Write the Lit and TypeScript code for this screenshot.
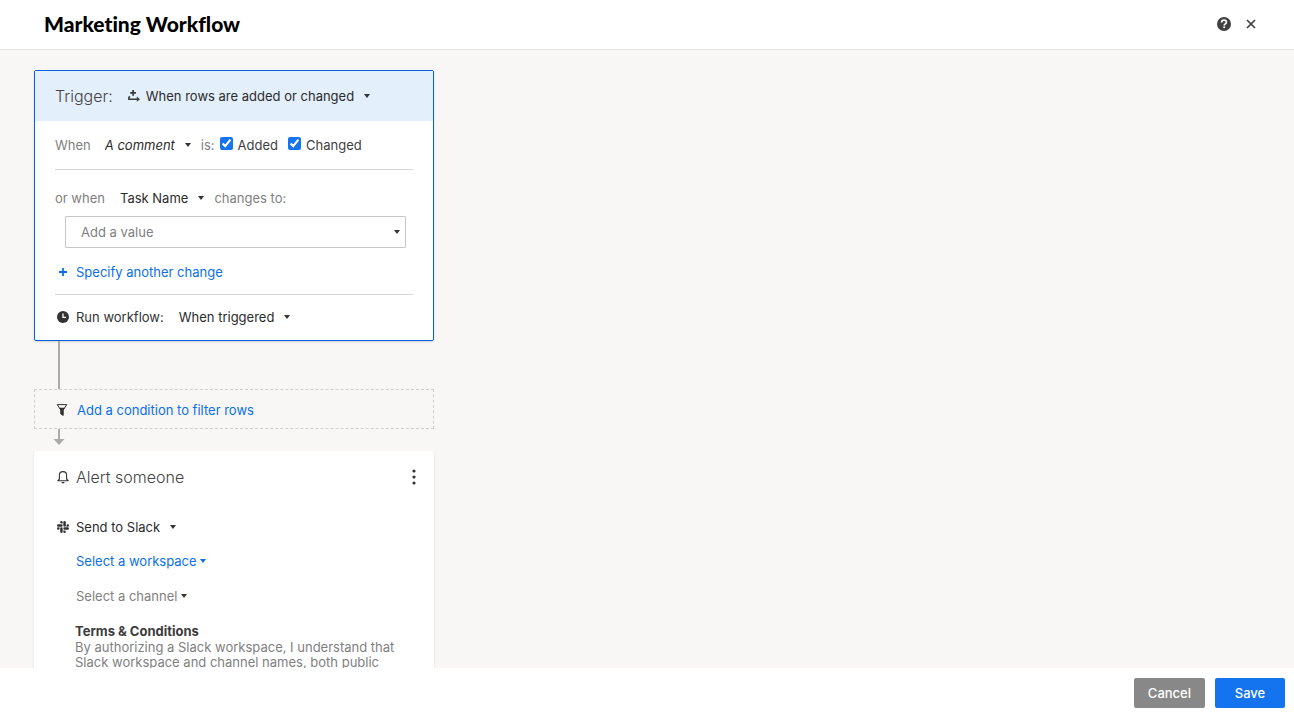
import { LitElement, html, css, svg } from "lit";
import { customElement, property, state } from "lit/decorators.js";

const icons: Record<string, { box: string; size: number; body: unknown }> = {
  help: {
    box: "0 0 14 14",
    size: 14,
    body: svg`<circle cx="7" cy="7" r="7" fill="currentColor"/>
      <path d="M4.6 5.4C4.6 4 5.6 3.2 7 3.2s2.4.8 2.4 2.1c0 1.6-2.2 1.5-2.2 3.1" fill="none" stroke="#fff" stroke-width="1.7"/>
      <rect x="6.3" y="9.3" width="1.8" height="1.8" fill="#fff"/>`,
  },
  close: {
    box: "0 0 10 10",
    size: 10,
    body: svg`<path d="M1 1l8 8M9 1l-8 8" stroke="currentColor" stroke-width="1.7"/>`,
  },
  rows: {
    box: "0 0 12 12",
    size: 12,
    body: svg`<path d="M4.2 0h1.8v2h2v1.8H6v2H4.2v-2h-2V2h2z" fill="currentColor"/>
      <path d="M1.9 6.4L.9 7.4v1.8h9" fill="none" stroke="currentColor" stroke-width="1.6"/>
      <path d="M8.8 6.6L12 9.2l-3.2 2.6z" fill="currentColor"/>`,
  },
  plus: {
    box: "0 0 8 8",
    size: 8,
    body: svg`<path d="M4 0v8M0 4h8" stroke="currentColor" stroke-width="1.8"/>`,
  },
  clock: {
    box: "0 0 12 12",
    size: 12,
    body: svg`<circle cx="6" cy="6" r="6" fill="currentColor"/>
      <path d="M6 2.4v4h3" fill="none" stroke="#fff" stroke-width="1.3"/>`,
  },
  filter: {
    box: "0 0 12 12",
    size: 12,
    body: svg`<path d="M1.2.6h9.6L7.2 6v5.4L4.8 10V6z" fill="none" stroke="currentColor" stroke-width="1"/>
      <path d="M2.8 3.8h6.4L7.2 6.2v5.4L4.8 10V6.2z" fill="currentColor"/>`,
  },
  bell: {
    box: "0 0 12 14",
    size: 14,
    body: svg`<path d="M2.4 9V5.2C2.4 3 4 1.6 6 1.6s3.6 1.4 3.6 3.6V9l1.6 1.7H.8z" fill="none" stroke="currentColor" stroke-width="1.1" stroke-linejoin="round"/>
      <path d="M4.3 12h3.4c-.2.9-.9 1.4-1.7 1.4s-1.5-.5-1.7-1.4z" fill="currentColor"/>`,
  },
  slack: {
    box: "0 0 24 24",
    size: 12,
    body: svg`<path fill="currentColor" d="M5.042 15.165a2.528 2.528 0 0 1-2.520 2.523A2.528 2.528 0 0 1 0 15.165a2.527 2.527 0 0 1 2.522-2.520h2.520v2.520zM6.313 15.165a2.527 2.527 0 0 1 2.521-2.520 2.527 2.527 0 0 1 2.521 2.520v6.313A2.528 2.528 0 0 1 8.834 24a2.528 2.528 0 0 1-2.521-2.522v-6.313zM8.834 5.042a2.528 2.528 0 0 1-2.521-2.520A2.528 2.528 0 0 1 8.834 0a2.528 2.528 0 0 1 2.521 2.522v2.520H8.834zM8.834 6.313a2.528 2.528 0 0 1 2.521 2.521 2.528 2.528 0 0 1-2.521 2.521H2.522A2.528 2.528 0 0 1 0 8.834a2.528 2.528 0 0 1 2.522-2.521h6.312zM18.956 8.834a2.528 2.528 0 0 1 2.522-2.521A2.528 2.528 0 0 1 24 8.834a2.528 2.528 0 0 1-2.522 2.521h-2.522V8.834zM17.688 8.834a2.528 2.528 0 0 1-2.523 2.521 2.527 2.527 0 0 1-2.520-2.521V2.522A2.527 2.527 0 0 1 15.165 0a2.528 2.528 0 0 1 2.523 2.522v6.312zM15.165 18.956a2.528 2.528 0 0 1 2.523 2.522A2.528 2.528 0 0 1 15.165 24a2.527 2.527 0 0 1-2.520-2.522v-2.522h2.520zM15.165 17.688a2.527 2.527 0 0 1-2.520-2.523 2.526 2.526 0 0 1 2.520-2.520h6.313A2.527 2.527 0 0 1 24 15.165a2.528 2.528 0 0 1-2.522 2.523h-6.313z"/>`,
  },
  more: {
    box: "0 0 4 16",
    size: 16,
    body: svg`<circle cx="2" cy="2" r="1.6" fill="currentColor"/><circle cx="2" cy="8" r="1.6" fill="currentColor"/><circle cx="2" cy="14" r="1.6" fill="currentColor"/>`,
  },
};

const icon = (name: string) => {
  const { box, size, body } = icons[name];
  return html`<svg class="icon" viewBox=${box} height=${size} aria-hidden="true">${body}</svg>`;
};

@customElement("pick-list")
class PickList extends LitElement {
  @property() label = "";
  @property({ type: Array }) options: string[] = [];

  static styles = css`
    :host {
      display: inline-grid;
      align-items: center;
      color: #2b2b2b;
      --caret: #333;
      --gap: 16px;
    }
    :host([variant="link"]) {
      --gap: 9px;
      --caret: #0b6fe8;
      color: #0b6fe8;
    }
    :host([variant="muted"]) {
      --gap: 10px;
      color: #7f7f7f;
    }
    :host([variant="italic"]) {
      font-style: italic;
    }
    :host([variant="boxed"]) {
      display: grid;
      color: #7f7f7f;
    }
    select,
    .caret {
      grid-area: 1 / 1;
    }
    select {
      appearance: none;
      field-sizing: content;
      margin: 0;
      padding: 0 var(--gap) 0 0;
      border: 0;
      background: none;
      color: inherit;
      font: inherit;
      height: 24px;
      cursor: pointer;
    }
    :host([variant="boxed"]) select {
      box-sizing: border-box;
      width: 100%;
      height: 32px;
      padding: 0 24px 0 15px;
      border: 1px solid #c6c6c6;
      border-radius: 1px;
      background: #fff;
    }
    .caret {
      justify-self: end;
      width: 6px;
      height: 4px;
      fill: var(--caret);
      pointer-events: none;
    }
    :host([variant="boxed"]) .caret {
      margin-right: 6px;
    }
  `;

  render() {
    return html`<select aria-label=${this.label}>
        ${this.options.map((o) => html`<option>${o}</option>`)}
      </select>
      <svg class="caret" viewBox="0 0 6 4" aria-hidden="true"><path d="M0 0h6L3 4z" /></svg>`;
  }
}

@customElement("app-root")
class AppRoot extends LitElement {
  @state() private added = true;
  @state() private changed = true;

  static styles = css`
    :host {
      display: flex;
      flex-direction: column;
      height: 100vh;
      background: #fff;
      color: #333;
      font: 13px/16px Inter, sans-serif;
    }
    header {
      display: flex;
      align-items: center;
      justify-content: space-between;
      box-sizing: border-box;
      height: 50px;
      padding: 0 38px 2px 44px;
      border-bottom: 1px solid #e2e1e0;
      flex: none;
    }
    h1 {
      margin: 0;
      color: #000;
      font: 900 21px/26px Lato, sans-serif;
      font-variant-ligatures: none;
    }
    button {
      font: inherit;
      cursor: pointer;
    }
    .plain {
      display: inline-flex;
      align-items: center;
      margin: 0;
      padding: 0;
      border: 0;
      background: none;
      color: inherit;
    }
    .icon {
      display: block;
      flex: none;
    }
    .tools {
      display: flex;
      align-items: center;
      gap: 15px;
      color: #404040;
    }
    main {
      flex: 1;
      min-height: 0;
      overflow: auto;
      scrollbar-width: none;
      padding: 20px 34px 0;
      background: #f8f7f6;
    }
    .flow {
      max-width: 400px;
    }
    .card {
      background: #fff;
      border-radius: 2px;
      box-shadow: 0 1px 2px rgba(0, 0, 0, 0.15);
    }
    .trigger {
      border: 1px solid #0561e0;
    }
    .row {
      display: flex;
      align-items: center;
    }
    .top {
      height: 50px;
      padding: 0 20px;
      background: #e3effb;
      color: #3c3c3c;
    }
    h2 {
      margin: 0;
      color: #444;
      font: 300 16px/20px Inter, sans-serif;
    }
    .top h2 {
      margin-right: 15px;
    }
    .top .icon {
      margin-right: 6px;
    }
    .body {
      padding: 0 20px;
    }
    .muted {
      color: #7f7f7f;
    }
    .section {
      border-bottom: 1px solid #d6d6d6;
    }
    .when {
      height: 48px;
    }
    .when pick-list {
      margin: 0 10px 0 14px;
    }
    .check {
      display: inline-flex;
      align-items: center;
      gap: 5px;
      margin-left: 5px;
      color: #404040;
    }
    .check + .check {
      margin-left: 10px;
    }
    input {
      width: 13px;
      height: 13px;
      margin: 0 0 3px;
      accent-color: #1473ee;
    }
    .change {
      padding: 16px 0 10px;
    }
    .change .row pick-list {
      margin: 0 10px 0 15px;
    }
    .value {
      display: block;
      padding: 6px 7px 12px 10px;
    }
    .iconed {
      display: grid;
      grid-template-columns: 16px auto;
      align-items: center;
      justify-content: start;
      gap: 5px;
    }
    .iconed .icon {
      justify-self: center;
    }
    .link {
      height: 24px;
      color: #0b6fe8;
      text-decoration: none;
    }
    .run {
      height: 44px;
      padding-bottom: 1px;
    }
    .run pick-list {
      margin-left: 15px;
    }
    .line {
      width: 2px;
      height: 48px;
      margin-left: 24px;
      background: #aaa;
    }
    .condition {
      box-sizing: border-box;
      height: 40px;
      padding: 2px 19px 0;
      gap: 7px;
      border: 1px dashed #cfcfcf;
      color: #333;
    }
    .condition span {
      color: #0b6fe8;
    }
    .arrow {
      display: block;
      margin: 0 0 6px 19px;
    }
    .alert {
      padding: 13px 18px 20px 21px;
    }
    .head {
      justify-content: space-between;
      height: 26px;
      margin-bottom: 25px;
    }
    .more {
      color: #333;
    }
    .steps {
      display: grid;
      justify-items: start;
      gap: 11px;
      padding: 10px 0 0 21px;
    }
    .terms {
      margin: 15px 0 0 20px;
      color: #7f7f7f;
      line-height: 15px;
    }
    .terms h3 {
      margin: 0;
      color: #3c3c3c;
      font: 700 13px/17px Inter, sans-serif;
    }
    .terms p {
      margin: 0;
    }
    footer {
      display: flex;
      align-items: center;
      justify-content: flex-end;
      gap: 10px;
      box-sizing: border-box;
      height: 49px;
      padding: 0 9px 0 20px;
      flex: none;
    }
    .btn {
      height: 30px;
      min-width: 70px;
      padding: 0 14px;
      border: 0;
      border-radius: 2px;
      color: #fff;
      font-weight: 500;
      background: #888;
    }
    .primary {
      background: #1473ee;
    }
  `;

  render() {
    return html`
      <header>
        <h1>Marketing Workflow</h1>
        <div class="tools">
          <button class="plain" aria-label="Help">${icon("help")}</button>
          <button class="plain" aria-label="Close">${icon("close")}</button>
        </div>
      </header>
      <main>
        <div class="flow">
          <section class="card trigger">
            <div class="row top">
              <h2>Trigger:</h2>
              ${icon("rows")}
              <pick-list label="Trigger" .options=${["When rows are added or changed"]}></pick-list>
            </div>
            <div class="body">
              <div class="row section when muted">
                <span>When</span>
                <pick-list variant="italic" label="Item" .options=${["A comment"]}></pick-list>
                <span>is:</span>
                <label class="check">
                  <input type="checkbox" .checked=${this.added}
                    @change=${(e: Event) => (this.added = (e.target as HTMLInputElement).checked)} />
                  <span>Added</span>
                </label>
                <label class="check">
                  <input type="checkbox" .checked=${this.changed}
                    @change=${(e: Event) => (this.changed = (e.target as HTMLInputElement).checked)} />
                  <span>Changed</span>
                </label>
              </div>
              <div class="section change">
                <div class="row muted">
                  <span>or when</span>
                  <pick-list label="Column" .options=${["Task Name"]}></pick-list>
                  <span>changes to:</span>
                </div>
                <div class="value">
                  <pick-list variant="boxed" label="Value" .options=${["Add a value"]}></pick-list>
                </div>
                <a class="iconed link" href="#">${icon("plus")}<span>Specify another change</span></a>
              </div>
              <div class="row run">
                <div class="iconed">${icon("clock")}<span>Run workflow:</span></div>
                <pick-list label="Run workflow" .options=${["When triggered"]}></pick-list>
              </div>
            </div>
          </section>
          <div class="line"></div>
          <a class="iconed link condition" href="#">${icon("filter")}<span>Add a condition to filter rows</span></a>
          <svg class="arrow" width="12" height="16" viewBox="0 0 12 16" aria-hidden="true">
            <path d="M5 0h2v10h4.5L6 16 .5 10H5z" fill="#aaa" />
          </svg>
          <section class="card alert">
            <div class="row head">
              <div class="iconed">${icon("bell")}<h2>Alert someone</h2></div>
              <button class="plain more" aria-label="More actions">${icon("more")}</button>
            </div>
            <div class="iconed">
              ${icon("slack")}
              <pick-list label="Channel type" .options=${["Send to Slack"]}></pick-list>
            </div>
            <div class="steps">
              <pick-list variant="link" label="Workspace" .options=${["Select a workspace"]}></pick-list>
              <pick-list variant="muted" label="Channel" .options=${["Select a channel"]}></pick-list>
            </div>
            <div class="terms">
              <h3>Terms &amp; Conditions</h3>
              <p>
                By authorizing a Slack workspace, I understand that Slack workspace and channel names, both public
              </p>
            </div>
          </section>
        </div>
      </main>
      <footer>
        <button class="btn">Cancel</button>
        <button class="btn primary">Save</button>
      </footer>
    `;
  }
}
